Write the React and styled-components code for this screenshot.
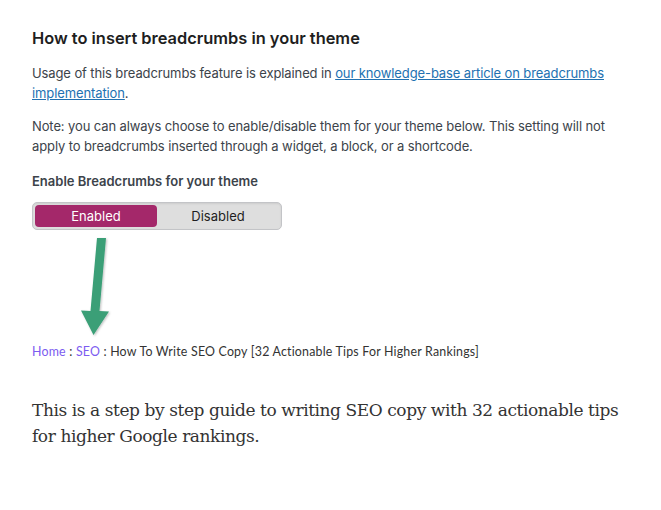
import React from "react";
import styled, { createGlobalStyle } from "styled-components";

const Global = createGlobalStyle`
  html, body { margin: 0; padding: 0; background: #fff; }
  body { font-family: Inter, "Liberation Sans", sans-serif; }
`;

const Page = styled.div`
  width: 661px;
  height: 510px;
  box-sizing: border-box;
  padding: 28px 32px 0 32px;
  display: flex;
  flex-direction: column;
  align-items: flex-start;
`;

const Heading = styled.h2`
  margin: 0;
  font-family: Inter, "Liberation Sans", sans-serif;
  font-size: 16.4px;
  line-height: 20px;
  font-weight: 600;
  color: #1e1e1e;
`;

const Para = styled.p`
  margin: ${(p) => p.$mt}px 0 0 0;
  font-size: 13px;
  line-height: 20px;
  letter-spacing: -0.11px;
  color: #3c434a;
  max-width: 590px;
`;

const Link = styled.a`
  color: #2271b1;
  text-decoration: underline;
`;

const Label = styled.div`
  margin-top: 15px;
  font-size: 13px;
  line-height: 20px;
  font-weight: 600;
  color: #3c434a;
`;

const Toggle = styled.div`
  margin-top: 11px;
  width: 250px;
  height: 28px;
  box-sizing: border-box;
  display: flex;
  padding: 2px;
  background: #dedede;
  border: 1px solid #c3c4c7;
  border-radius: 5px;
  box-shadow: inset 0 1px 2px rgba(0, 0, 0, 0.08);
`;

const Segment = styled.div`
  flex: 1;
  display: flex;
  align-items: center;
  justify-content: center;
  border-radius: 4px;
  font-size: 13px;
  background: ${(p) => (p.$active ? "#a4286a" : "transparent")};
  color: ${(p) => (p.$active ? "#fff" : "#1e1e1e")};
`;

const ArrowSvg = styled.svg`
  display: block;
  margin-top: 2px;
`;

const Crumbs = styled.div`
  margin-top: 2px;
  font-family: Lato, sans-serif;
  font-size: 12.4px;
  line-height: 16px;
  color: #333;
  letter-spacing: 0.2px;
`;

const Crumb = styled.span`
  color: #7c5cf0;
`;

const Lead = styled.p`
  margin: 37px 0 0 0;
  font-family: "DejaVu Serif", serif;
  font-size: 17px;
  line-height: 26px;
  letter-spacing: -0.42px;
  color: #333;
  max-width: 600px;
`;

export default function App() {
  return (
    <>
      <Global />
      <Page>
        <Heading>How to insert breadcrumbs in your theme</Heading>
        <Para $mt={15}>
          Usage of this breadcrumbs feature is explained in{" "}
          <Link href="#">our knowledge-base article on breadcrumbs implementation</Link>.
        </Para>
        <Para $mt={13}>
          Note: you can always choose to enable/disable them for your theme below. This setting will not
          apply to breadcrumbs inserted through a widget, a block, or a shortcode.
        </Para>
        <Label>Enable Breadcrumbs for your theme</Label>
        <Toggle>
          <Segment $active>Enabled</Segment>
          <Segment>Disabled</Segment>
        </Toggle>
        <ArrowSvg width="120" height="110" viewBox="0 0 120 110">
          <defs>
            <filter id="sh" x="-20%" y="-20%" width="140%" height="140%">
              <feDropShadow dx="1" dy="1" stdDeviation="1" floodColor="#000" floodOpacity="0.25" />
            </filter>
          </defs>
          <polygon
            filter="url(#sh)"
            fill="#3a9f77"
            points="65,6 74,6 67.5,79 77,79.5 61.5,103 49,78.5 58.5,79"
          />
        </ArrowSvg>
        <Crumbs>
          <Crumb>Home</Crumb> : <Crumb>SEO</Crumb> : How To Write SEO Copy [32 Actionable Tips For Higher Rankings]
        </Crumbs>
        <Lead>
          This is a step by step guide to writing SEO copy with 32 actionable tips for higher Google rankings.
        </Lead>
      </Page>
    </>
  );
}
